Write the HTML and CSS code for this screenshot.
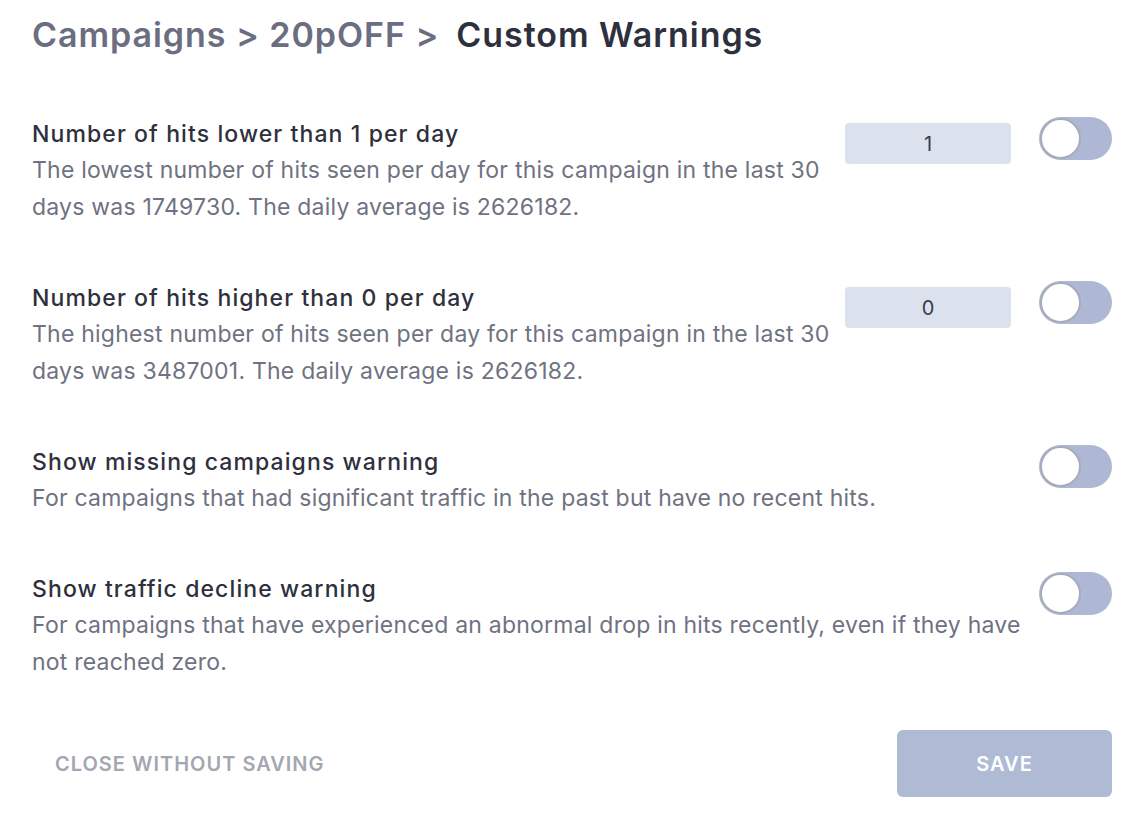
FILE: index.html
```html
<!DOCTYPE html>
<html lang="en">
<head>
<meta charset="utf-8">
<title>Custom Warnings</title>
<link rel="stylesheet" href="styles.css">
</head>
<body>
<div class="page">
  <h1 class="crumbs"><span class="crumb">Campaigns &gt; 20pOFF &gt;</span><span class="current">Custom Warnings</span></h1>

  <div class="rows">
    <div class="row">
      <div class="text">
        <div class="title">Number of hits lower than 1 per day</div>
        <div class="desc">The lowest number of hits seen per day for this campaign in the last 30 days was 1749730. The daily average is 2626182.</div>
      </div>
      <div class="input">1</div>
      <div class="toggle"><span class="knob"></span></div>
    </div>

    <div class="row">
      <div class="text">
        <div class="title">Number of hits higher than 0 per day</div>
        <div class="desc">The highest number of hits seen per day for this campaign in the last 30 days was 3487001. The daily average is 2626182.</div>
      </div>
      <div class="input">0</div>
      <div class="toggle"><span class="knob"></span></div>
    </div>

    <div class="row">
      <div class="text">
        <div class="title">Show missing campaigns warning</div>
        <div class="desc">For campaigns that had significant traffic in the past but have no recent hits.</div>
      </div>
      <div class="toggle"><span class="knob"></span></div>
    </div>

    <div class="row">
      <div class="text">
        <div class="title">Show traffic decline warning</div>
        <div class="desc">For campaigns that have experienced an abnormal drop in hits recently, even if they have not reached zero.</div>
      </div>
      <div class="toggle"><span class="knob"></span></div>
    </div>
  </div>

  <div class="footer">
    <button class="btn-close">Close without saving</button>
    <button class="btn-save">Save</button>
  </div>
</div>
</body>
</html>
```

FILE: styles.css
```css
* { box-sizing: border-box; }
html, body { margin: 0; padding: 0; background: #ffffff; }
body {
  font-family: Inter, "Noto Sans", "Liberation Sans", sans-serif;
  color: #2e303d;
}
.page {
  padding: 14px 31px 0 32px;
}
.crumbs {
  margin: 0;
  font-size: 34px;
  line-height: 41px;
  font-weight: 600;
  letter-spacing: 0.95px;
}
.crumb { color: #6a6e80; }
.current { color: #2e303d; margin-left: 17px; }

.rows {
  margin-top: 61px;
  display: flex;
  flex-direction: column;
  gap: 54px;
}
.row {
  display: flex;
  align-items: flex-start;
}
.text {
  flex: 1;
  min-width: 0;
  padding-right: 8px;
}
.title {
  font-size: 23px;
  line-height: 36px;
  color: #2e303d;
  font-weight: 450;
  letter-spacing: 1.1px;
}
.desc {
  font-size: 23px;
  line-height: 37px;
  color: #6f7281;
  letter-spacing: 0.22px;
}
.input {
  width: 166px;
  height: 41px;
  margin-top: 7px;
  margin-left: 2px;
  margin-right: 28px;
  background: #dce1ee;
  border-radius: 4px;
  display: flex;
  align-items: center;
  justify-content: center;
  font-size: 20px;
  color: #3a3c48;
  flex: none;
}
.toggle {
  width: 73px;
  height: 43px;
  margin-top: 1px;
  border-radius: 22px;
  background: #aeb8d4;
  display: flex;
  align-items: center;
  padding-left: 1px;
  flex: none;
}
.knob {
  width: 41px;
  height: 41px;
  border-radius: 50%;
  background: #ffffff;
  border: 2px solid #a7abba;
}

.footer {
  margin-top: 49px;
  display: flex;
  justify-content: space-between;
  align-items: center;
}
.btn-close {
  font-family: inherit;
  background: none;
  border: none;
  padding: 0 23px;
  font-size: 20px;
  font-weight: 600;
  text-transform: uppercase;
  color: #a4a7b1;
  letter-spacing: 1px;
}
.btn-save {
  font-family: inherit;
  width: 215px;
  height: 67px;
  border: none;
  border-radius: 6px;
  background: #afbad5;
  color: #ffffff;
  font-size: 20px;
  font-weight: 600;
  text-transform: uppercase;
  letter-spacing: 1px;
}
```
